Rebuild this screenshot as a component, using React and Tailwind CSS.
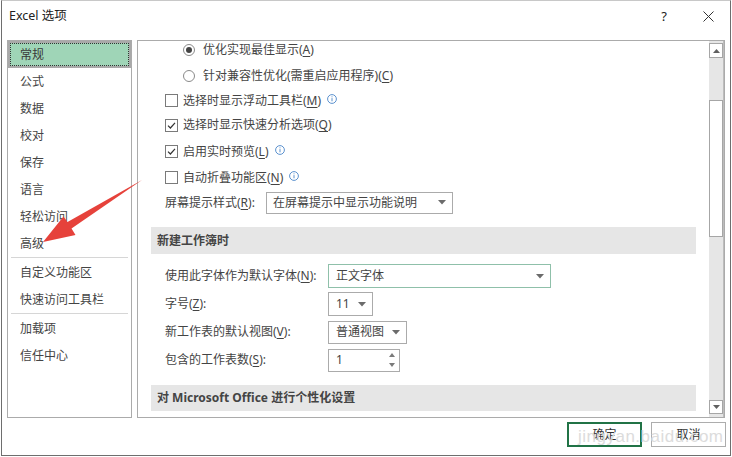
import React from "react";

const font = { fontFamily: '"Noto Sans", "Noto Sans CJK SC", sans-serif' };

function Mn({ k }) {
  return <u className="underline-offset-2">{k}</u>;
}

function Info() {
  return (
    <svg width="10" height="10" viewBox="0 0 10 10" className="ml-[6px] -mt-[3px] shrink-0">
      <circle cx="5" cy="5" r="4.4" fill="none" stroke="#4a86c8" strokeWidth="0.9" />
      <rect x="4.55" y="4.1" width="0.9" height="3.2" fill="#4a86c8" />
      <rect x="4.55" y="2.4" width="0.9" height="0.9" fill="#4a86c8" />
    </svg>
  );
}

function Radio({ on }) {
  return (
    <span className="w-[12px] h-[12px] rounded-full border border-[#8a8a8a] bg-white flex items-center justify-center shrink-0">
      {on && <span className="w-[6px] h-[6px] rounded-full bg-[#444]" />}
    </span>
  );
}

function Check({ on }) {
  return (
    <span className="w-[13px] h-[13px] border border-[#7a7a7a] bg-white flex items-center justify-center shrink-0">
      {on && (
        <svg width="11" height="11" viewBox="0 0 11 11">
          <path d="M2 5.6 L4.4 8 L9 2.8" fill="none" stroke="#333" strokeWidth="1.2" />
        </svg>
      )}
    </span>
  );
}

function Caret() {
  return (
    <svg width="8" height="5" viewBox="0 0 8 5" className="shrink-0">
      <path d="M0 0 H8 L4 4.5 Z" fill="#6b6b6b" />
    </svg>
  );
}

const navItems = [
  ["常规"],
  ["公式"],
  ["数据"],
  ["校对"],
  ["保存"],
  ["语言"],
  ["轻松访问"],
  ["高级"],
  "sep",
  ["自定义功能区"],
  ["快速访问工具栏"],
  "sep",
  ["加载项"],
  ["信任中心"],
];

export default function App() {
  return (
    <div className="w-[732px] h-[457px] bg-white relative overflow-hidden text-[12px] text-[#444]" style={font}>
      <div className="ml-[1px] w-[730px] h-[456px] border border-[#6e6e6e] border-t-[#c8c8c8] flex flex-col">
        {/* title bar */}
        <div className="h-[39px] flex items-start pt-[6px] pl-[7px] pr-[15px] text-[#222]">
          <span className="text-[12.5px] leading-[18px]">Excel 选项</span>
          <span className="ml-auto mr-[36px] text-[13px] leading-[18px]">?</span>
          <svg width="11" height="11" viewBox="0 0 11 11" className="mt-[4px] mr-[1px]">
            <path d="M0.5 0.5 L10.5 10.5 M10.5 0.5 L0.5 10.5" stroke="#333" strokeWidth="1" />
          </svg>
        </div>

        {/* body */}
        <div className="flex h-[378px] pl-[5px]">
          {/* category list */}
          <div className="w-[125px] h-full border border-[#ababab] flex flex-col">
            {navItems.map((it, i) =>
              it === "sep" ? (
                <div key={i} className="h-[2px] mx-[3px] border-t border-[#d6d6d6]" />
              ) : i === 0 ? (
                <div key={i} className="h-[27px] border-2 border-[#a9a9a9] bg-[#9fd5b7] flex">
                  <div className="flex-1 border border-dotted border-[#333] flex items-center pl-[9px] text-[#3a3a3a]">
                    {it[0]}
                  </div>
                </div>
              ) : (
                <div key={i} className="h-[27px] flex items-center pl-[12px]">
                  {it[0]}
                </div>
              )
            )}
          </div>

          {/* settings pane */}
          <div className="ml-[5px] w-[588px] h-full border border-[#ababab] flex overflow-hidden">
            <div className="flex-1 overflow-hidden">
              <div className="-mt-[4px] flex flex-col">
                <div className="h-[26px] flex items-center pl-[45px]">
                  <Radio on />
                  <span className="ml-[8px]">优化实现最佳显示(<Mn k="A" />)</span>
                </div>
                <div className="h-[26px] flex items-center pl-[45px]">
                  <Radio />
                  <span className="ml-[8px]">针对兼容性优化(需重启应用程序)(<Mn k="C" />)</span>
                </div>
                <div className="h-[23px] flex items-center pl-[27px]">
                  <Check />
                  <span className="ml-[5px]">选择时显示浮动工具栏(<Mn k="M" />)</span>
                  <Info />
                </div>
                <div className="h-[26px] flex items-center pl-[27px]">
                  <Check on />
                  <span className="ml-[5px]">选择时显示快速分析选项(<Mn k="Q" />)</span>
                </div>
                <div className="h-[27px] flex items-center pl-[27px]">
                  <Check on />
                  <span className="ml-[5px]">启用实时预览(<Mn k="L" />)</span>
                  <Info />
                </div>
                <div className="h-[25px] flex items-center pl-[27px]">
                  <Check />
                  <span className="ml-[5px]">自动折叠功能区(<Mn k="N" />)</span>
                  <Info />
                </div>
                <div className="h-[25px] flex items-center pl-[27px]">
                  <span className="w-[101px]">屏幕提示样式(<Mn k="R" />):</span>
                  <div className="w-[187px] h-[22px] border border-[#ababab] flex items-center pl-[6px] pr-[6px]">
                    <span className="flex-1">在屏幕提示中显示功能说明</span>
                    <Caret />
                  </div>
                </div>

                <div className="mt-[12px] mx-[13px] h-[27px] bg-[#e6e6e6] flex items-center pl-[6px] font-bold">
                  新建工作簿时
                </div>

                <div className="mt-[8px] h-[28px] flex items-center pl-[27px]">
                  <span className="w-[163px]">使用此字体作为默认字体(<Mn k="N" />):</span>
                  <div className="w-[223px] h-[24px] border border-[#8fc0aa] flex items-center pl-[7px] pr-[6px]">
                    <span className="flex-1">正文字体</span>
                    <Caret />
                  </div>
                </div>
                <div className="h-[28px] flex items-center pl-[27px]">
                  <span className="w-[163px]">字号(<Mn k="Z" />):</span>
                  <div className="w-[45px] h-[24px] border border-[#ababab] flex items-center pl-[7px] pr-[6px]">
                    <span className="flex-1">11</span>
                    <Caret />
                  </div>
                </div>
                <div className="h-[28px] flex items-center pl-[27px]">
                  <span className="w-[163px]">新工作表的默认视图(<Mn k="V" />):</span>
                  <div className="w-[79px] h-[23px] border border-[#ababab] flex items-center pl-[7px] pr-[6px]">
                    <span className="flex-1">普通视图</span>
                    <Caret />
                  </div>
                </div>
                <div className="h-[28px] flex items-center pl-[27px]">
                  <span className="w-[163px]">包含的工作表数(<Mn k="S" />):</span>
                  <div className="w-[72px] h-[23px] border border-[#ababab] flex items-center pl-[7px] pr-[4px]">
                    <span className="flex-1">1</span>
                    <div className="flex flex-col gap-[6px]">
                      <svg width="6" height="4" viewBox="0 0 6 4"><path d="M0 4 H6 L3 0 Z" fill="#7a7a7a" /></svg>
                      <svg width="6" height="4" viewBox="0 0 6 4"><path d="M0 0 H6 L3 4 Z" fill="#7a7a7a" /></svg>
                    </div>
                  </div>
                </div>

                <div className="mt-[11px] mx-[13px] h-[26px] bg-[#e6e6e6] flex items-center pl-[6px] font-bold">
                  对 Microsoft Office 进行个性化设置
                </div>
              </div>
            </div>

            {/* scrollbar */}
            <div className="w-[15px] h-full bg-[#e6e6e6] border-r border-[#bdbdbd] flex flex-col">
              <div className="mt-[2px] h-[15px] bg-white border border-[#a6a6a6] flex items-center justify-center">
                <svg width="7" height="4" viewBox="0 0 7 4"><path d="M0 4 H7 L3.5 0 Z" fill="#606060" /></svg>
              </div>
              <div className="mt-[42px] h-[137px] bg-white border border-[#a6a6a6]" />
              <div className="mt-auto mb-[3px] h-[14px] bg-white border border-[#a6a6a6] flex items-center justify-center">
                <svg width="7" height="4" viewBox="0 0 7 4"><path d="M0 0 H7 L3.5 4 Z" fill="#606060" /></svg>
              </div>
            </div>
          </div>
        </div>

        {/* footer buttons */}
        <div className="mt-[4px] flex justify-end gap-[9px] pr-[4px]">
          <div className="w-[75px] h-[25px] border-2 border-[#217346] flex items-center justify-center text-[#333]">
            确定
          </div>
          <div className="w-[75px] h-[25px] border border-[#adadad] flex items-center justify-center text-[#333]">
            取消
          </div>
        </div>
      </div>

      {/* watermark */}
      <div className="absolute left-[578px] top-[424px] text-[17px] text-[#dcdcdc] pointer-events-none tracking-[0.5px]" style={{ fontFamily: '"Liberation Sans", sans-serif' }}>
        jingyan.baidu.com
      </div>

      {/* red annotation arrow */}
      <svg className="absolute left-0 top-0 pointer-events-none" width="732" height="457" viewBox="0 0 732 457">
        <polygon
          points="142,180 71.5,228.5 75.5,235 43,242 63.5,216.5 67.5,222"
          fill="#e6423b"
        />
      </svg>
    </div>
  );
}
